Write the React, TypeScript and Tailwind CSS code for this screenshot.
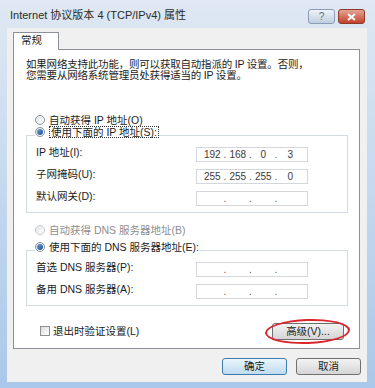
const font = "font-['Liberation_Sans','Noto_Sans_CJK_SC',sans-serif]";

function Radio({ checked = false, disabled = false }: { checked?: boolean; disabled?: boolean }) {
  return (
    <span
      className={`flex items-center justify-center w-[10px] h-[10px] rounded-full border bg-gradient-to-br from-[#e2e4e7] to-white ${
        disabled ? "border-[#c8cbcf]" : "border-[#8a939d]"
      }`}
    >
      {checked && <span className="w-[6px] h-[6px] rounded-full bg-gradient-to-br from-[#6fa4dc] to-[#174a92]" />}
    </span>
  );
}

function IpBox({ parts }: { parts?: string[] }) {
  const p = parts ?? ["", "", "", ""];
  return (
    <div className="flex items-center w-[112px] h-[15px] border border-[#d3d6da] bg-white px-[4px] text-[10px] text-[#3a3a3a] leading-none">
      {p.map((v, i) => (
        <div key={i} className="flex flex-1 items-center">
          <span className="flex-1 text-center">{v}</span>
          {i < 3 && <span className="w-[3px] text-center text-[#555]">.</span>}
        </div>
      ))}
    </div>
  );
}

function Row({ label, parts }: { label: string; parts?: string[] }) {
  return (
    <div className="flex items-center h-[15px]">
      <span className="w-[160px] -mt-[4px]">{label}</span>
      <IpBox parts={parts} />
    </div>
  );
}

function WinButton({ label, primary = false }: { label: string; primary?: boolean }) {
  return (
    <button
      className={`w-[65px] h-[17px] rounded-[3px] border text-[10.5px] leading-none text-[#222] bg-gradient-to-b ${
        primary
          ? "border-[#3d7bad] from-[#eaf5fc] to-[#c0dcf0]"
          : "border-[#707070] from-[#f3f3f3] to-[#d5d5d5]"
      }`}
    >
      {label}
    </button>
  );
}

export default function App() {
  return (
    <div className={`w-[375px] h-[388px] flex flex-col bg-gradient-to-b from-[#dfe8f3] to-[#a9c8ea] ${font} text-[10.5px] text-[#1b1b1b]`}>
      {/* title bar */}
      <div className="h-[28px] flex justify-between pl-[10px] pr-[10px]">
        <span className="text-[11px] text-[#2a2a2a] mt-[10px] leading-none">Internet 协议版本 4 (TCP/IPv4) 属性</span>
        <div className="flex gap-[3px] pt-[9px]">
          <div className="w-[27px] h-[15px] rounded-[3px] border border-[#8a9db5] bg-gradient-to-b from-[#eef3f8] to-[#bfcfe1] flex items-center justify-center text-[10px] text-[#5a6f8a] leading-none">
            ?
          </div>
          <div className="w-[27px] h-[15px] rounded-[3px] border border-[#8b3b2c] bg-gradient-to-b from-[#e6a394] to-[#c23f27] flex items-center justify-center">
            <svg width="9" height="8" viewBox="0 0 9 8">
              <path d="M1 1 L8 7 M8 1 L1 7" stroke="white" strokeWidth="2" />
            </svg>
          </div>
        </div>
      </div>

      {/* client area */}
      <div className="flex-1 flex flex-col mx-[7px] mb-[6px] ml-[7px] mr-[8px] bg-[#f0f0f0] pt-[4px] pl-[6px] pr-[7px]">
        <div className="flex">
          <div className="relative z-10 w-[46px] h-[18px] -mb-px border border-b-0 border-[#8e9097] bg-white pl-[7px] pt-[2px] leading-none">
            常规
          </div>
        </div>
        <div className="h-[300px] border border-[#8e9097] bg-white flex flex-col">
          <p className="ml-[12px] mt-[9px] leading-[11px] tracking-[-0.2px]">
            如果网络支持此功能，则可以获取自动指派的 IP 设置。否则，
            <br />
            您需要从网络系统管理员处获得适当的 IP 设置。
          </p>

          <div className="flex items-center gap-[4px] ml-[21px] mt-[33px] h-[12px]">
            <Radio />
            <span className="leading-none">自动获得 IP 地址(O)</span>
          </div>

          <fieldset className="ml-[12px] mr-[11px] border border-[#d5dbe2] pb-[6px]">
            <legend className="ml-[8px] pb-[6px]">
              <span className="flex items-center gap-[4px] h-[12px]">
                <Radio checked />
                <span className="leading-none border border-dotted border-[#333] px-[1px]">使用下面的 IP 地址(S):</span>
              </span>
            </legend>
            <div className="flex flex-col gap-[7px] pl-[9px] mt-[3px]">
              <Row label="IP 地址(I):" parts={["192", "168", "0", "3"]} />
              <Row label="子网掩码(U):" parts={["255", "255", "255", "0"]} />
              <Row label="默认网关(D):" />
            </div>
          </fieldset>

          <div className="flex items-center gap-[4px] ml-[21px] mt-[11px] h-[12px] text-[#8d8d8d]">
            <Radio disabled />
            <span className="leading-none">自动获得 DNS 服务器地址(B)</span>
          </div>

          <fieldset className="ml-[12px] mr-[11px] mt-[5px] border border-[#d5dbe2] pb-[6px]">
            <legend className="ml-[8px] pb-[6px]">
              <span className="flex items-center gap-[4px] h-[12px]">
                <Radio checked />
                <span className="leading-none">使用下面的 DNS 服务器地址(E):</span>
              </span>
            </legend>
            <div className="flex flex-col gap-[7px] pl-[9px] mt-[3px]">
              <Row label="首选 DNS 服务器(P):" />
              <Row label="备用 DNS 服务器(A):" />
            </div>
          </fieldset>

          <div className="flex items-center justify-between mt-[16px] ml-[26px] mr-[15px] h-[18px]">
            <div className="flex items-center gap-[3px]">
              <span className="w-[10px] h-[10px] border border-[#8e8f8f] bg-gradient-to-br from-[#dcdcdc] to-white" />
              <span className="leading-none">退出时验证设置(L)</span>
            </div>
            <div className="relative">
              <button className="w-[72px] h-[17px] rounded-[3px] border border-[#707070] bg-gradient-to-b from-[#f3f3f3] to-[#d5d5d5] text-[10.5px] leading-none text-[#222]">
                高级(V)...
              </button>
              <span className="absolute -left-[7px] -right-[6px] -top-[4px] -bottom-[4px] rounded-[50%] border-2 border-[#d8262e] -rotate-2" />
            </div>
          </div>
        </div>

        <div className="flex justify-end gap-[9px] mt-[9px] -mr-[1px]">
          <WinButton label="确定" primary />
          <WinButton label="取消" />
        </div>
      </div>
    </div>
  );
}
